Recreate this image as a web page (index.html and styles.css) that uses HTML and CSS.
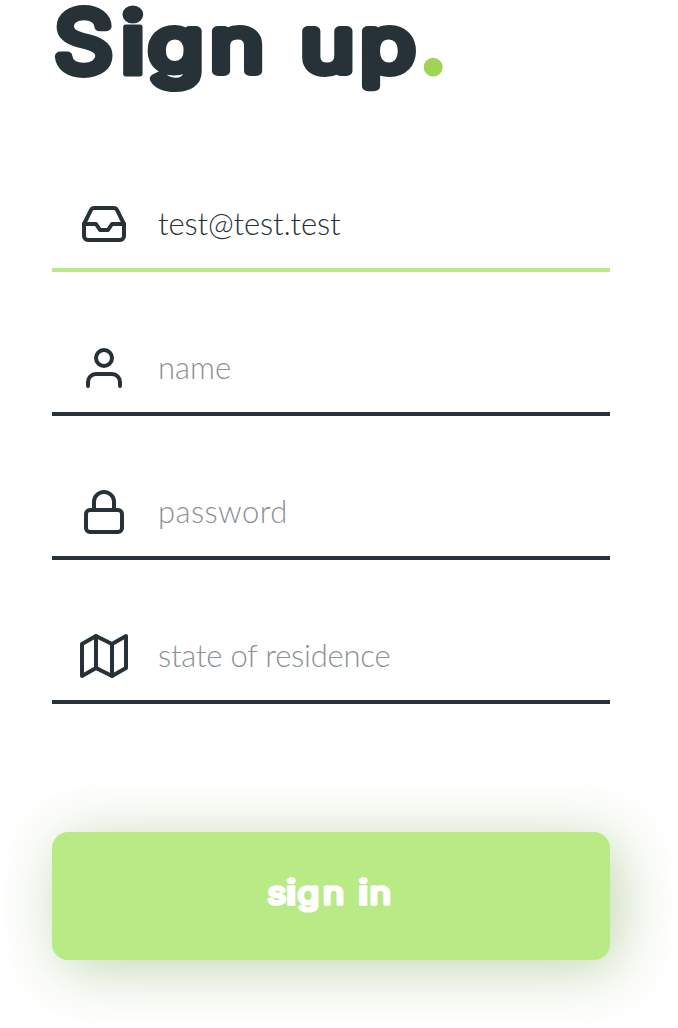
FILE: index.html
```html
<!DOCTYPE html>
<html lang="en">
<head>
<meta charset="utf-8">
<title>Sign up</title>
<link rel="stylesheet" href="styles.css">
</head>
<body>
<main class="page">
  <h1 class="title">
    <svg class="title-art" width="558" height="128" viewBox="52 0 558 128">
      <text class="title-text" transform="scale(1.1 1)"><tspan class="title-cap" x="49.5" y="71.8">S</tspan><tspan class="title-i" x="109" y="73.8">i</tspan></text>
      <text class="title-text" transform="scale(1.22 1)" x="122 172.6 220 246.5 295.5" y="71">gn up</text>
      <text class="title-text title-dot" y="71.8" x="421.5">.</text>
    </svg>
  </h1>
  <form class="form">
    <label class="field field-active">
      <svg class="icon" viewBox="0 0 24 24"><polyline points="22 12 16 12 14 15 10 15 8 12 2 12"/><path d="M5.45 5.11L2 12v6a2 2 0 0 0 2 2h16a2 2 0 0 0 2-2v-6l-3.45-6.89A2 2 0 0 0 16.76 4H7.24a2 2 0 0 0-1.79 1.11z"/></svg>
      <span class="value email">test@test.test</span>
    </label>
    <label class="field">
      <svg class="icon" viewBox="0 0 24 24"><path d="M20 21v-2a4 4 0 0 0-4-4H8a4 4 0 0 0-4 4v2"/><circle cx="12" cy="7" r="4"/></svg>
      <span class="value hint">name</span>
    </label>
    <label class="field">
      <svg class="icon" viewBox="0 0 24 24"><rect x="3" y="11" width="18" height="11" rx="2"/><path d="M7 11V7a5 5 0 0 1 10 0v4"/></svg>
      <span class="value hint secret">password</span>
    </label>
    <label class="field">
      <svg class="icon" viewBox="0 0 24 24"><polygon points="1 6 1 22 8 18 16 22 23 18 23 2 16 6 8 2"/><path d="M8 2v16M16 6v16"/></svg>
      <span class="value hint region">state of residence</span>
    </label>
    <button class="submit" type="button">
      <svg class="submit-art" width="140" height="60" viewBox="260 864 140 60">
        <text class="submit-text" transform="scale(1.2 1)" y="903.9"><tspan x="223">s</tspan><tspan class="submit-i" x="237.9" y="905.2">i</tspan><tspan x="248 269.2 290" y="903.9">gn </tspan><tspan class="submit-i" x="297.9" y="905.2">i</tspan><tspan x="308.2" y="903.9">n</tspan></text>
      </svg>
    </button>
  </form>
</main>
</body>
</html>
```
FILE: styles.css
```css
body {
  margin: 0;
  background: #fff;
  color: #263238;
  font-family: Lato, "Open Sans", sans-serif;
  overflow: hidden;
}
.page {
  height: 1028px;
  padding: 0 68px 0 52px;
  box-sizing: border-box;
}
.title {
  margin: 0;
  height: 128px;
}
.title-art,
.submit-art {
  display: block;
  overflow: visible;
}
.title-text {
  font: 300 74px Inter, sans-serif;
  fill: #263238;
  stroke: #263238;
  stroke-width: 10;
  stroke-linejoin: round;
}
.title-cap {
  font-size: 84px;
}
.title-i {
  font-size: 86px;
  font-weight: 700;
  stroke-width: 5;
}
.title-dot {
  font-size: 70px;
  font-weight: 700;
  stroke-width: 7;
  fill: #a0d455;
  stroke: #a0d455;
}
.form {
  display: flex;
  flex-direction: column;
}
.field {
  display: flex;
  align-items: center;
  gap: 30px;
  height: 48px;
  margin-top: 72px;
  padding: 0 28px 20px;
  border-bottom: 4px solid #263238;
}
.field-active {
  border-color: #b8ea86;
}
.icon {
  width: 48px;
  height: 48px;
  fill: none;
  stroke: #263238;
  stroke-width: 2;
  stroke-linecap: round;
  stroke-linejoin: round;
}
.value {
  padding-bottom: 2px;
  font-size: 31px;
  font-weight: 300;
  line-height: 46px;
  white-space: nowrap;
}
.email {
  letter-spacing: -.14px;
}
.secret {
  letter-spacing: .4px;
}
.region {
  letter-spacing: -.22px;
}
.hint {
  color: #8b9295;
}
.submit {
  display: flex;
  align-items: center;
  justify-content: center;
  height: 128px;
  margin-top: 128px;
  padding: 0 2px 4px 0;
  border: 0;
  border-radius: 16px;
  background: #b8ea86;
  box-shadow: 8px 8px 60px rgba(98, 150, 50, .4);
}
.submit-text {
  font: 300 30px Inter, sans-serif;
  fill: #fff;
  stroke: #fff;
  stroke-width: 3.7;
  stroke-linejoin: round;
}
.submit-i {
  font-size: 35px;
  font-weight: 700;
  stroke-width: 1.6;
}
```
